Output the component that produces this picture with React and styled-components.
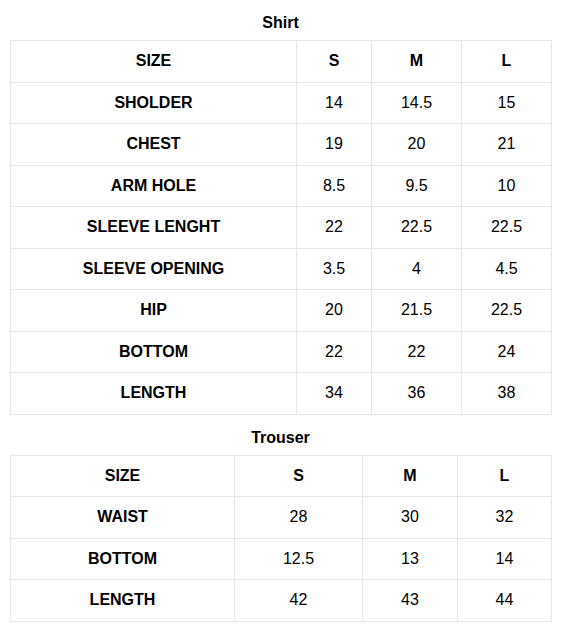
import React from 'react';
import styled, { createGlobalStyle } from 'styled-components';

const GlobalStyle = createGlobalStyle`
  body {
    margin: 0;
    background: #fff;
    font-family: "Liberation Sans", Arial, sans-serif;
    color: #000;
  }
`;

const Page = styled.div`
  width: 541px;
  padding: 0 10px;
`;

const Title = styled.h3`
  margin: 0;
  padding: 13px 0 7px;
  font-size: 16px;
  line-height: 20px;
  font-weight: bold;
  text-align: center;
`;

const Table = styled.table`
  width: 541px;
  border-collapse: collapse;
  table-layout: fixed;
`;

const Col = styled.col`
  width: ${props => props.w}px;
`;

const Td = styled.td`
  border: 1px solid #e6e6e6;
  padding: 11px 4px;
  line-height: 18.5px;
  font-size: 16px;
  text-align: center;
  font-weight: ${props => (props.bold ? 'bold' : 'normal')};
  white-space: nowrap;
`;

const shirt = {
  widths: [286, 75, 90, 90],
  head: ['SIZE', 'S', 'M', 'L'],
  rows: [
    ['SHOLDER', '14', '14.5', '15'],
    ['CHEST', '19', '20', '21'],
    ['ARM HOLE', '8.5', '9.5', '10'],
    ['SLEEVE LENGHT', '22', '22.5', '22.5'],
    ['SLEEVE OPENING', '3.5', '4', '4.5'],
    ['HIP', '20', '21.5', '22.5'],
    ['BOTTOM', '22', '22', '24'],
    ['LENGTH', '34', '36', '38'],
  ],
};

const trouser = {
  widths: [224, 128, 95, 94],
  head: ['SIZE', 'S', 'M', 'L'],
  rows: [
    ['WAIST', '28', '30', '32'],
    ['BOTTOM', '12.5', '13', '14'],
    ['LENGTH', '42', '43', '44'],
  ],
};

function SizeTable({ data }) {
  return (
    <Table>
      <colgroup>
        {data.widths.map((w, i) => (
          <Col key={i} w={w} />
        ))}
      </colgroup>
      <tbody>
        <tr>
          {data.head.map(h => (
            <Td key={h} bold>{h}</Td>
          ))}
        </tr>
        {data.rows.map(row => (
          <tr key={row[0]}>
            {row.map((cell, i) => (
              <Td key={i} bold={i === 0}>{cell}</Td>
            ))}
          </tr>
        ))}
      </tbody>
    </Table>
  );
}

export default function App() {
  return (
    <>
      <GlobalStyle />
      <Page>
        <Title>Shirt</Title>
        <SizeTable data={shirt} />
        <Title>Trouser</Title>
        <SizeTable data={trouser} />
      </Page>
    </>
  );
}
